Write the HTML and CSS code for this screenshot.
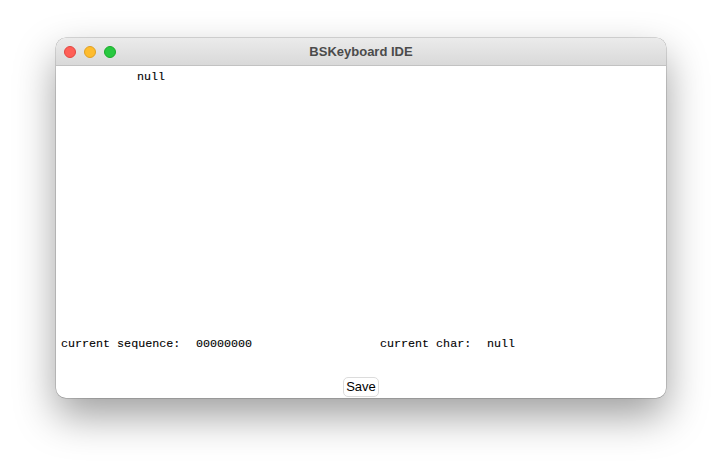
FILE: index.html
```html
<!DOCTYPE html>
<html>
<head>
<meta charset="utf-8">
<link rel="stylesheet" href="styles.css">
</head>
<body>
<div class="window">
  <div class="titlebar">
    <div class="lights">
      <span class="light red"></span>
      <span class="light yellow"></span>
      <span class="light green"></span>
    </div>
    <div class="title">BSKeyboard IDE</div>
  </div>
  <div class="content">
    <div class="top-line">null</div>
    <div class="spacer"></div>
    <div class="status">
      <span>current sequence:</span>
      <span>00000000</span>
      <span>current char:</span>
      <span>null</span>
    </div>
    <div class="actions">
      <button class="save">Save</button>
    </div>
  </div>
</div>
</body>
</html>
```

FILE: styles.css
```css
html {
  height: 100%;
  margin: 0;
  padding: 0;
  background: #ffffff;
}
body {
  margin: 0;
  min-height: 472px;
  box-sizing: border-box;
  padding: 38px 56px 0 56px;
  background: #ffffff;
}
.window {
  width: 610px;
  height: 360px;
  border-radius: 10px;
  overflow: hidden;
  background: #ffffff;
  box-shadow: 0 0 0 0.5px rgba(0,0,0,0.28), 0 18px 40px rgba(0,0,0,0.38);
  display: flex;
  flex-direction: column;
}
.titlebar {
  height: 27px;
  background: linear-gradient(#ebebeb, #d9d9d9);
  border-bottom: 1px solid #c2c2c2;
  display: flex;
  align-items: center;
  position: relative;
  flex: none;
}
.lights {
  display: flex;
  gap: 8px;
  padding-left: 8px;
}
.light {
  width: 12px;
  height: 12px;
  border-radius: 50%;
  box-sizing: border-box;
}
.red { background: #fe5f57; border: 0.5px solid #e14640; }
.yellow { background: #febc2e; border: 0.5px solid #dfa023; }
.green { background: #28c840; border: 0.5px solid #1aab29; }
.title {
  position: absolute;
  left: 0;
  right: 0;
  top: 0;
  bottom: 0;
  display: flex;
  align-items: center;
  justify-content: center;
  font-family: "Liberation Sans", Arial, sans-serif;
  font-weight: bold;
  font-size: 13px;
  color: #4b4b4b;
}
.content {
  flex: 1;
  display: flex;
  flex-direction: column;
  font-family: "Liberation Mono", "Courier New", monospace;
  font-size: 11.7px;
  color: #000;
  -webkit-text-stroke: 0.1px #000;
}
.top-line {
  padding: 4px 0 0 81px;
  line-height: 15px;
}
.spacer {
  flex: 1;
}
.status {
  display: grid;
  grid-template-columns: 135px 184px 107px 1fr;
  padding-left: 5px;
  line-height: 15px;
  white-space: pre;
}
.actions {
  display: flex;
  justify-content: center;
  padding: 25px 0 1px 0;
}
.save {
  font-family: "Liberation Sans", Arial, sans-serif;
  font-size: 13px;
  color: #000;
  background: #ffffff;
  border: 1px solid #dcdcdc;
  border-radius: 5px;
  height: 20px;
  padding: 0 2px;
  line-height: 18px;
  -webkit-text-stroke: 0;
}
```
